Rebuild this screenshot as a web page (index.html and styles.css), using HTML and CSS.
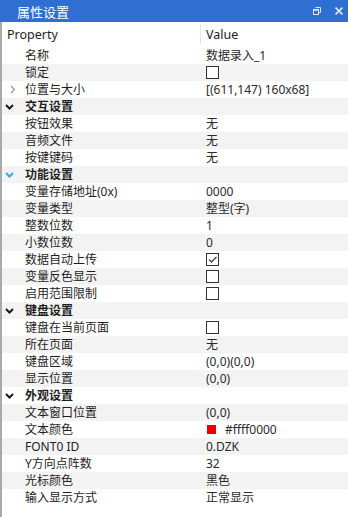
FILE: index.html
```html
<!DOCTYPE html>
<html lang="zh-CN">
<head>
    <meta charset="UTF-8"/>
    <title>属性设置</title>
<link rel="stylesheet" href="styles.css">
</head>
<body>
    <div id="panel">
        <!-- title bar -->
        <div class="titlebar">
            <span class="title">属性设置</span>
            <span class="tools">
                <svg class="restore" width="8" height="8" viewBox="0 0 8 8">
                    <path d="M2.5 0.5h5v5h-2" fill="none" stroke="#dfe6f2" stroke-width="1"/>
                    <rect x="0.5" y="2.5" width="5" height="5" fill="none" stroke="#dfe6f2" stroke-width="1"/>
                    <path d="M0.5 3h5" stroke="#dfe6f2" stroke-width="1.5"/>
                </svg>
                <svg class="close" width="8" height="8" viewBox="0 0 8 8">
                    <path d="M0.5 0.5l7 7M7.5 0.5l-7 7" stroke="#dfe6f2" stroke-width="1.6"/>
                </svg>
            </span>
        </div>

        <div class="grid">
            <div class="head">
                <span class="name">Property</span>
                <span class="value">Value</span>
            </div>

            <div class="row"><span class="name">名称</span><span class="value">数据录入_1</span></div>
            <div class="row"><span class="name">锁定</span><span class="value"><i class="check"></i></span></div>
            <div class="row"><span class="name">
                <svg class="arrow" width="6" height="9" viewBox="0 0 6 9"><path d="M1 1l3.5 3.5L1 8" fill="none" stroke="#9a9a9a" stroke-width="1.3"/></svg>位置与大小</span><span class="value">[(611,147) 160x68]</span></div>

            <div class="row group"><span class="name">
                <svg class="arrow down" width="9" height="6" viewBox="0 0 9 6"><path d="M1 1l3.5 3.5L8 1" fill="none" stroke="#1a1a1a" stroke-width="2"/></svg>交互设置</span><span class="value"></span></div>
            <div class="row"><span class="name">按钮效果</span><span class="value">无</span></div>
            <div class="row"><span class="name">音频文件</span><span class="value">无</span></div>
            <div class="row"><span class="name">按键键码</span><span class="value">无</span></div>

            <div class="row group"><span class="name">
                <svg class="arrow down" width="9" height="6" viewBox="0 0 9 6"><path d="M1 1l3.5 3.5L8 1" fill="none" stroke="#3fa6e0" stroke-width="2"/></svg>功能设置</span><span class="value"></span></div>
            <div class="row"><span class="name">变量存储地址(0x)</span><span class="value">0000</span></div>
            <div class="row"><span class="name">变量类型</span><span class="value">整型(字)</span></div>
            <div class="row"><span class="name">整数位数</span><span class="value">1</span></div>
            <div class="row"><span class="name">小数位数</span><span class="value">0</span></div>
            <div class="row"><span class="name">数据自动上传</span><span class="value"><i class="check on">
                <svg width="11" height="11" viewBox="0 0 11 11"><path d="M2 5.5l2.5 2.5L9.5 3" fill="none" stroke="#333" stroke-width="1.2"/></svg></i></span></div>
            <div class="row"><span class="name">变量反色显示</span><span class="value"><i class="check"></i></span></div>
            <div class="row"><span class="name">启用范围限制</span><span class="value"><i class="check"></i></span></div>

            <div class="row group"><span class="name">
                <svg class="arrow down" width="9" height="6" viewBox="0 0 9 6"><path d="M1 1l3.5 3.5L8 1" fill="none" stroke="#1a1a1a" stroke-width="2"/></svg>键盘设置</span><span class="value"></span></div>
            <div class="row"><span class="name">键盘在当前页面</span><span class="value"><i class="check"></i></span></div>
            <div class="row"><span class="name">所在页面</span><span class="value">无</span></div>
            <div class="row"><span class="name">键盘区域</span><span class="value">(0,0)(0,0)</span></div>
            <div class="row"><span class="name">显示位置</span><span class="value">(0,0)</span></div>

            <div class="row group"><span class="name">
                <svg class="arrow down" width="9" height="6" viewBox="0 0 9 6"><path d="M1 1l3.5 3.5L8 1" fill="none" stroke="#1a1a1a" stroke-width="2"/></svg>外观设置</span><span class="value"></span></div>
            <div class="row"><span class="name">文本窗口位置</span><span class="value">(0,0)</span></div>
            <div class="row"><span class="name">文本颜色</span><span class="value"><i class="swatch"></i>#ffff0000</span></div>
            <div class="row"><span class="name">FONT0 ID</span><span class="value">0.DZK</span></div>
            <div class="row"><span class="name">Y方向点阵数</span><span class="value">32</span></div>
            <div class="row"><span class="name">光标颜色</span><span class="value">黑色</span></div>
            <div class="row"><span class="name">输入显示方式</span><span class="value">正常显示</span></div>
        </div>
    </div>
</body>
</html>
```

FILE: styles.css
```css
* {
    margin: 0;
    padding: 0;
    box-sizing: border-box;
}

body {
    width: 348px;
    height: 517px;
    background: white;
    font: 12px "Noto Sans", "Noto Sans CJK SC", sans-serif;
    color: #1e1e1e;
    overflow: hidden;
}

#panel {
    display: flex;
    flex-direction: column;
    height: 517px;
}

/* Title bar */
.titlebar {
    display: flex;
    align-items: center;
    justify-content: space-between;
    height: 22px;
    padding: 0 5px 0 17px;
    background: #2f6fd1;
    color: white;
    font-size: 13px;
}

.tools {
    display: flex;
    align-items: center;
    gap: 14px;
}

.tools svg {
    display: block;
}

/* Property grid */
.grid {
    flex: 1;
    border-left: 2px solid #a9a9a9;
}

.head, .row {
    display: grid;
    grid-template-columns: 199px 1fr;
}

.head {
    height: 25px;
    align-items: center;
    font-size: 12.5px;
}

.head .name {
    padding-left: 5px;
    border-right: 1px solid #e6e6e6;
    line-height: 21px;
}

.head .value {
    padding-left: 5px;
}

.row {
    height: 17px;
    line-height: 17px;
}

/* stripe every other row */
.row:nth-child(odd) {
    background: #f3f3f3;
}

.row .name {
    display: flex;
    align-items: center;
    padding-left: 23px;
    position: relative;
}

.row .value {
    display: flex;
    align-items: center;
    padding-left: 5px;
    color: #2a2a2a;
}

.group .name {
    font-weight: bold;
}

.arrow {
    position: absolute;
    left: 8px;
    top: 4px;
}

.arrow.down {
    left: 3px;
    top: 6px;
}

.check {
    display: block;
    width: 13px;
    height: 13px;
    border: 1px solid #333;
    background: white;
}

.check svg {
    display: block;
}

.swatch {
    display: block;
    width: 9px;
    height: 9px;
    background: #ee0000;
    margin: 0 9px 0 1px;
}
```
